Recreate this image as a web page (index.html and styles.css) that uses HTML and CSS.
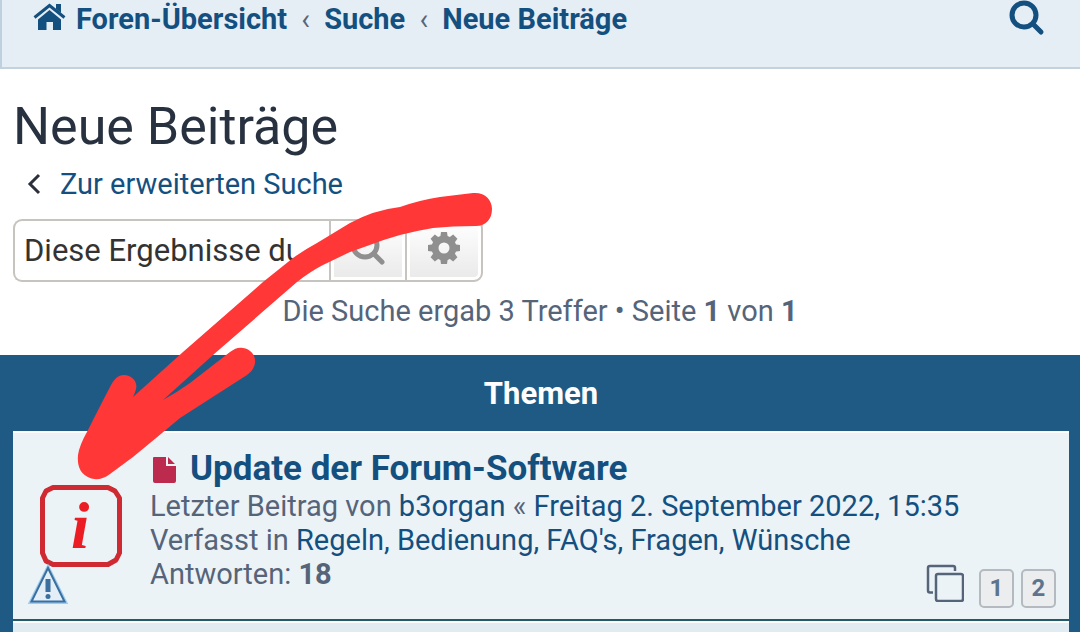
FILE: index.html
```html
<!DOCTYPE html>
<html lang="de">
<head>
    <meta charset="UTF-8">
    <meta name="viewport" content="width=device-width, initial-scale=1.0">
    <title>Neue Beiträge</title>
    <link rel="stylesheet" href="styles.css">
</head>
<body>

    <!-- BREADCRUMBS -->
    <header class="navbar">
        <nav class="breadcrumbs">
            <a href="#" class="crumb">
                <svg class="icon-home" viewBox="0 0 34 28" width="34" height="28" aria-hidden="true">
                    <path d="M1.5 14.5 L16.5 2.5 L31.5 14.5" fill="none" stroke="currentColor" stroke-width="3"/>
                    <path d="M23 1h5v9l-5-4z" fill="currentColor"/>
                    <path d="M5 16.5 L16.5 7 L28 16.5 V27 H20 V19 H13.500 V27 H5z" fill="currentColor"/>
                </svg>
                Foren-Übersicht</a>
            <span class="sep">‹</span>
            <a href="#" class="crumb">Suche</a>
            <span class="sep">‹</span>
            <a href="#" class="crumb">Neue Beiträge</a>
        </nav>
        <a href="#" class="nav-search" aria-label="Suche">
            <svg viewBox="0 0 36 36" width="36" height="36" aria-hidden="true">
                <circle cx="15" cy="15" r="12" fill="none" stroke="currentColor" stroke-width="5"/>
                <path d="M24 24 L32 32" stroke="currentColor" stroke-width="5" stroke-linecap="round"/>
            </svg>
        </a>
    </header>

    <!-- SEARCH -->
    <main>
        <div class="search-head">
            <h1>Neue Beiträge</h1>
            <p class="advanced">
                <svg viewBox="0 0 14 22" width="14" height="22" aria-hidden="true">
                    <path d="M12 2 L3 11 L12 20" fill="none" stroke="#2b303b" stroke-width="3"/>
                </svg>
                <a href="#">Zur erweiterten Suche</a>
            </p>
            <form class="search-box">
                <input type="search" class="search-input" aria-label="Diese Ergebnisse durchsuchen" placeholder="Diese Ergebnisse durchsuchen…">
                <button type="button" class="search-btn" aria-label="Suche">
                    <svg viewBox="0 0 36 36" width="36" height="36" aria-hidden="true">
                        <circle cx="15" cy="15" r="12" fill="none" stroke="#8f8f8f" stroke-width="5"/>
                        <path d="M24 24 L32 32" stroke="#8f8f8f" stroke-width="5" stroke-linecap="round"/>
                    </svg>
                </button>
                <button type="button" class="search-btn search-btn-last" aria-label="Erweiterte Suche">
                    <svg viewBox="-16 -16 32 32" width="32" height="32" aria-hidden="true">
                        <g fill="#8f8f8f">
                            <path id="tooth" d="M-4 -9 L-3 -16 H3 L4 -9z"/>
                            <use href="#tooth" transform="rotate(45)"/>
                            <use href="#tooth" transform="rotate(90)"/>
                            <use href="#tooth" transform="rotate(135)"/>
                            <use href="#tooth" transform="rotate(180)"/>
                            <use href="#tooth" transform="rotate(225)"/>
                            <use href="#tooth" transform="rotate(270)"/>
                            <use href="#tooth" transform="rotate(315)"/>
                        </g>
                        <circle r="9" fill="none" stroke="#8f8f8f" stroke-width="7"/>
                    </svg>
                </button>
            </form>
            <p class="result-count">Die Suche ergab 3 Treffer • Seite <strong>1</strong> von <strong>1</strong></p>
        </div>

        <!-- TOPICS -->
        <section class="topics">
            <h2>Themen</h2>
            <ul class="topic-list">
                <li class="topic">
                    <div class="topic-icons">
                        <svg class="icon-info" viewBox="0 0 82 82" width="82" height="82" role="img" aria-label="Bekanntmachung">
                            <path d="M13 2.500 H68 L75 6 L79.500 13 V68 L76 75 L68 79.500 H13 L6 76 L2.500 68 V13 L6 6z" fill="none" stroke="#cf2a31" stroke-width="5" stroke-linejoin="round"/>
                            <text x="31" y="63" class="info-letter">i</text>
                        </svg>
                        <svg class="icon-warn" viewBox="0 0 40 38" width="40" height="38" aria-hidden="true">
                            <path d="M20 1 L37 35 H3z" fill="#dcebf6" stroke="#9ccbee" stroke-width="4"/>
                            <path d="M20 1 L36.500 34.500 H3.500z" fill="#e3eef6" stroke="#3a6f9f" stroke-width="2"/>
                            <path d="M17.500 12 H22.500 V25 H17.500z" fill="#3a6f9f"/>
                            <circle cx="20" cy="29.500" r="2.500" fill="#3a6f9f"/>
                        </svg>
                    </div>
                    <div class="topic-body">
                        <h3>
                            <svg viewBox="0 0 24 28" width="24" height="28" aria-hidden="true">
                                <path d="M2 2 H14 V11 H24 V26 Q24 28 22 28 H3 Q1 28 1 26 V3 Q1 2 2 2z M16 2 L23 9 H16z" fill="#bc2a4d"/>
                            </svg>
                            <a href="#">Update der Forum-Software</a>
                        </h3>
                        <p>Letzter Beitrag von <a href="#">b3organ</a> « <a href="#">Freitag 2. September 2022, 15:35</a></p>
                        <p>Verfasst in <a href="#">Regeln, Bedienung, FAQ's, Fragen, Wünsche</a></p>
                        <div class="topic-foot">
                            <p>Antworten: <strong>18</strong></p>
                            <div class="pages">
                                <svg viewBox="0 0 38 38" width="38" height="38" aria-hidden="true">
                                    <path d="M7 28.500 H4 Q2 28.500 2 26.500 V4 Q2 2 4 2 H27 Q29 2 29 4 V7" fill="none" stroke="#56647a" stroke-width="2.500"/>
                                    <rect x="10" y="10" width="27" height="27" rx="2" fill="none" stroke="#56647a" stroke-width="2.500"/>
                                </svg>
                                <a href="#" class="page">1</a>
                                <a href="#" class="page">2</a>
                            </div>
                        </div>
                    </div>
                </li>
                <li class="topic-next"></li>
            </ul>
        </section>
    </main>

    <!-- hand drawn arrow, lies over the page -->
    <svg class="arrow" viewBox="0 0 500 490" width="500" height="490" aria-hidden="true">
        <path fill="#ff3737" d="M110 387 C114 379 118 375 124 375 C132 375 138 382 136 389 Q135 393 133 397
            L183 352 L263 282 L293 258 Q304 250 317 243 L350 223 Q374 210 400 207 Q420 200 440 197 L473 193
            C485 192 492 200 492 209 C492 219 486 226 476 226 Q452 226 433 228 Q415 231 400 235 Q382 240 367 246
            L350 252 L323 265 Q311 271 297 282 L213 355 L163 400 Q176 393 190 383 L230 352
            C235 348 239 347 243 348 C251 349 256 356 255 363 Q254 370 247 375 L180 418 Q155 439 133 457 L110 474
            C102 480 95 480 90 478 C80 474 77 466 78 455 Q79 446 88 430 Q98 410 110 387z"/>
    </svg>

</body>
</html>
```
FILE: styles.css
```css
*
{
    box-sizing: border-box;
}
body
{
    margin: 0;
    font-family: Roboto, 'Liberation Sans', sans-serif;
    font-size: 29px;
    line-height: 34px;
    color: #56647a;
    background-color: #fff;
}
h1, h2, h3, p, ul
{
    margin: 0;
    padding: 0;
}
a
{
    color: #14507f;
    text-decoration: none;
}
a:hover
{
    color: #d31141;
}
svg
{
    flex: none;
}

/* breadcrumbs */
.navbar
{
    display: flex;
    justify-content: space-between;
    align-items: flex-start;
    height: 69px;
    padding: 0 35px 0 31px;
    background-color: #e5edf5;
    border-left: 2px solid #bfd1df;
    border-bottom: 2px solid #c3d2dd;
}
.breadcrumbs
{
    display: flex;
    align-items: center;
    padding-top: 2px;
    white-space: nowrap;
}
.crumb
{
    display: flex;
    align-items: center;
    font-weight: bold;
}
.icon-home
{
    margin: 0 9px 4px 0;
}
.sep
{
    width: 37px;
    text-align: center;
}
.nav-search
{
    height: 36px;
}

/* search */
.search-head
{
    padding: 28px 13px 27px;
}
h1
{
    font-size: 52px;
    font-weight: normal;
    line-height: 60px;
    color: #28313f;
}
.advanced
{
    display: flex;
    align-items: center;
    gap: 19px;
    margin-top: 10px;
    padding-left: 14px;
}
.search-box
{
    display: flex;
    width: 470px;
    max-width: 100%;
    height: 63px;
    margin-top: 18px;
}
.search-input
{
    flex: 1;
    min-width: 0;
    padding: 0 9px;
    font: inherit;
    font-size: 31px;
    color: #333;
    background-color: #fff;
    border: 2px solid #c7c3bf;
    border-right: none;
    border-radius: 9px 0 0 9px;
    appearance: none;
}
.search-input::placeholder
{
    color: #333;
    opacity: 1;
}
.search-btn
{
    display: flex;
    justify-content: center;
    align-items: center;
    width: 78px;
    padding: 0 0 6px;
    background-image: linear-gradient(#fff, #e9e9e9);
    border: 2px solid #c7c3bf;
    box-shadow: inset 0 0 0 3px #fff;
    cursor: pointer;
}
.search-btn-last
{
    margin-left: -2px;
    border-radius: 0 9px 9px 0;
}
.result-count
{
    margin-top: 12px;
    text-align: center;
}

/* topics */
.topics
{
    padding: 0 11px 0 13px;
    background-color: #1f5a85;
}
h2
{
    padding: 22px 0 20px;
    font-size: 31px;
    line-height: 34px;
    text-align: center;
    color: #fff;
}
.topic-list
{
    list-style: none;
}
.topic
{
    display: flex;
    padding: 16px 13px 11px 15px;
    background-color: #ecf3f7;
    border-top: 2px solid #fff;
    border-bottom: 2px solid #215a6b;
}
.topic-next
{
    height: 11px;
    background-color: #e1ebf2;
    border-top: 2px solid #fff;
}
.topic-icons
{
    display: flex;
    flex-direction: column;
    width: 122px;
    padding-top: 36px;
}
.icon-info
{
    margin-left: 12px;
}
.icon-warn
{
    overflow: visible;
}
.info-letter
{
    font-family: 'Liberation Serif', serif;
    font-size: 66px;
    font-weight: bold;
    font-style: italic;
    fill: #ec1c24;
}
.topic-body
{
    flex: 1;
}
h3
{
    display: flex;
    align-items: center;
    gap: 14px;
    padding-left: 2px;
    font-size: 35px;
    line-height: 40px;
}
.topic-foot
{
    display: flex;
    justify-content: space-between;
}
.pages
{
    display: flex;
    gap: 7px;
    padding-top: 12px;
}
.pages svg
{
    margin: -5px 8px 0 0;
}
.page
{
    width: 35px;
    height: 39px;
    font-size: 24px;
    font-weight: bold;
    line-height: 35px;
    text-align: center;
    color: #5c758c;
    background-color: #ecedee;
    border: 2px solid #b4bac0;
    border-radius: 5px;
}

/* arrow */
.arrow
{
    position: absolute;
    top: 0;
    left: 0;
    pointer-events: none;
}
```
